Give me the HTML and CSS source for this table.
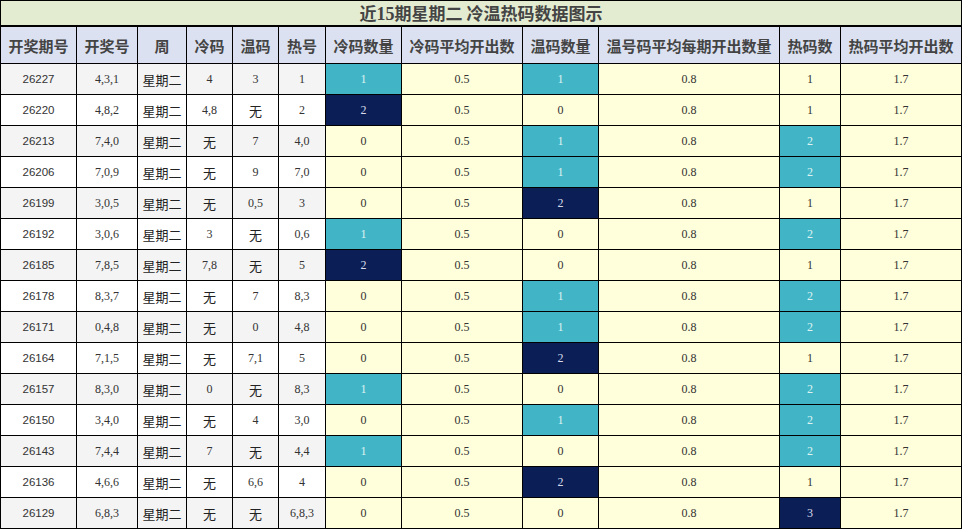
FILE: index.html
```html
<!DOCTYPE html>
<html lang="zh">
<head>
<meta charset="utf-8">
<title>近15期星期二 冷温热码数据图示</title>
<link rel="stylesheet" href="styles.css">
</head>
<body>
<div class="wrap">
  <div class="title"><span>近<b class="num">15</b>期星期二 冷温热码数据图示</span></div>
  <table class="grid">
    <colgroup>
      <col class="w1"><col class="w2"><col class="w3"><col class="w4"><col class="w5"><col class="w6">
      <col class="w7"><col class="w8"><col class="w9"><col class="w10"><col class="w11"><col class="w12">
    </colgroup>
    <thead>
      <tr>
        <th>开奖期号</th><th>开奖号</th><th>周</th><th>冷码</th><th>温码</th><th>热号</th>
        <th>冷码数量</th><th>冷码平均开出数</th><th>温码数量</th><th>温号码平均每期开出数量</th><th>热码数</th><th>热码平均开出数</th>
      </tr>
    </thead>
    <tbody>
      <tr class="odd"><td class="id">26227</td><td>4,3,1</td><td class="cjk">星期二</td><td>4</td><td>3</td><td>1</td><td class="y teal">1</td><td class="y">0.5</td><td class="y teal">1</td><td class="y">0.8</td><td class="y">1</td><td class="y">1.7</td></tr>
      <tr><td class="id">26220</td><td>4,8,2</td><td class="cjk">星期二</td><td>4,8</td><td class="cjk">无</td><td>2</td><td class="y navy">2</td><td class="y">0.5</td><td class="y">0</td><td class="y">0.8</td><td class="y">1</td><td class="y">1.7</td></tr>
      <tr class="odd"><td class="id">26213</td><td>7,4,0</td><td class="cjk">星期二</td><td class="cjk">无</td><td>7</td><td>4,0</td><td class="y">0</td><td class="y">0.5</td><td class="y teal">1</td><td class="y">0.8</td><td class="y teal">2</td><td class="y">1.7</td></tr>
      <tr><td class="id">26206</td><td>7,0,9</td><td class="cjk">星期二</td><td class="cjk">无</td><td>9</td><td>7,0</td><td class="y">0</td><td class="y">0.5</td><td class="y teal">1</td><td class="y">0.8</td><td class="y teal">2</td><td class="y">1.7</td></tr>
      <tr class="odd"><td class="id">26199</td><td>3,0,5</td><td class="cjk">星期二</td><td class="cjk">无</td><td>0,5</td><td>3</td><td class="y">0</td><td class="y">0.5</td><td class="y navy">2</td><td class="y">0.8</td><td class="y">1</td><td class="y">1.7</td></tr>
      <tr><td class="id">26192</td><td>3,0,6</td><td class="cjk">星期二</td><td>3</td><td class="cjk">无</td><td>0,6</td><td class="y teal">1</td><td class="y">0.5</td><td class="y">0</td><td class="y">0.8</td><td class="y teal">2</td><td class="y">1.7</td></tr>
      <tr class="odd"><td class="id">26185</td><td>7,8,5</td><td class="cjk">星期二</td><td>7,8</td><td class="cjk">无</td><td>5</td><td class="y navy">2</td><td class="y">0.5</td><td class="y">0</td><td class="y">0.8</td><td class="y">1</td><td class="y">1.7</td></tr>
      <tr><td class="id">26178</td><td>8,3,7</td><td class="cjk">星期二</td><td class="cjk">无</td><td>7</td><td>8,3</td><td class="y">0</td><td class="y">0.5</td><td class="y teal">1</td><td class="y">0.8</td><td class="y teal">2</td><td class="y">1.7</td></tr>
      <tr class="odd"><td class="id">26171</td><td>0,4,8</td><td class="cjk">星期二</td><td class="cjk">无</td><td>0</td><td>4,8</td><td class="y">0</td><td class="y">0.5</td><td class="y teal">1</td><td class="y">0.8</td><td class="y teal">2</td><td class="y">1.7</td></tr>
      <tr><td class="id">26164</td><td>7,1,5</td><td class="cjk">星期二</td><td class="cjk">无</td><td>7,1</td><td>5</td><td class="y">0</td><td class="y">0.5</td><td class="y navy">2</td><td class="y">0.8</td><td class="y">1</td><td class="y">1.7</td></tr>
      <tr class="odd"><td class="id">26157</td><td>8,3,0</td><td class="cjk">星期二</td><td>0</td><td class="cjk">无</td><td>8,3</td><td class="y teal">1</td><td class="y">0.5</td><td class="y">0</td><td class="y">0.8</td><td class="y teal">2</td><td class="y">1.7</td></tr>
      <tr><td class="id">26150</td><td>3,4,0</td><td class="cjk">星期二</td><td class="cjk">无</td><td>4</td><td>3,0</td><td class="y">0</td><td class="y">0.5</td><td class="y teal">1</td><td class="y">0.8</td><td class="y teal">2</td><td class="y">1.7</td></tr>
      <tr class="odd"><td class="id">26143</td><td>7,4,4</td><td class="cjk">星期二</td><td>7</td><td class="cjk">无</td><td>4,4</td><td class="y teal">1</td><td class="y">0.5</td><td class="y">0</td><td class="y">0.8</td><td class="y teal">2</td><td class="y">1.7</td></tr>
      <tr><td class="id">26136</td><td>4,6,6</td><td class="cjk">星期二</td><td class="cjk">无</td><td>6,6</td><td>4</td><td class="y">0</td><td class="y">0.5</td><td class="y navy">2</td><td class="y">0.8</td><td class="y">1</td><td class="y">1.7</td></tr>
      <tr class="odd"><td class="id">26129</td><td>6,8,3</td><td class="cjk">星期二</td><td class="cjk">无</td><td class="cjk">无</td><td>6,8,3</td><td class="y">0</td><td class="y">0.5</td><td class="y">0</td><td class="y">0.8</td><td class="y navy">3</td><td class="y">1.7</td></tr>
    </tbody>
  </table>
</div>
</body>
</html>
```

FILE: styles.css
```css
* { box-sizing: border-box; }
html, body { margin: 0; padding: 0; background: #ffffff; }
body { font-family: "Liberation Serif", "Noto Sans CJK SC", serif; color: #333; }
.wrap { width: 962px; }
.title {
  height: 26px;
  border: 1px solid #000;
  background: #e3ebd1;
  display: flex;
  align-items: center;
  justify-content: center;
  font-family: "Noto Sans CJK SC", sans-serif;
  font-weight: bold;
  font-size: 17px;
  color: #444;
  line-height: 1;
}
.title .num { font-family: "Liberation Serif", serif; font-weight: bold; font-size: 18px; }
.grid {
  width: 962px;
  border-collapse: collapse;
  table-layout: fixed;
  border: 1px solid #000;
}
.w1 { width: 76px; } .w2 { width: 61px; } .w3 { width: 49px; } .w4 { width: 46px; }
.w5 { width: 46px; } .w6 { width: 47px; } .w7 { width: 76px; } .w8 { width: 121px; }
.w9 { width: 76px; } .w10 { width: 181px; } .w11 { width: 61px; } .w12 { width: 121px; }
.grid th, .grid td { border: 1px solid #000; padding: 0; text-align: center; white-space: nowrap; overflow: hidden; }
.grid th {
  height: 37px;
  background: #dbe1f1;
  font-family: "Noto Sans CJK SC", sans-serif;
  font-weight: bold;
  font-size: 15px;
  color: #444;
}
.grid td { height: 31px; font-size: 12px; background: #ffffff; color: #333; }
.grid tr.odd td { background: #f4f4f4; }
.grid td.id { font-family: "Liberation Sans", sans-serif; font-size: 11.5px; }
.grid td.cjk { font-family: "Noto Sans CJK SC", sans-serif; font-size: 13px; color: #222; }
.grid td.y, .grid tr.odd td.y { background: #ffffdb; }
.grid td.teal, .grid tr.odd td.teal { background: #41b5c5; color: #dff2f4; }
.grid td.navy, .grid tr.odd td.navy { background: #0b1e56; color: #d8dcea; }
```
